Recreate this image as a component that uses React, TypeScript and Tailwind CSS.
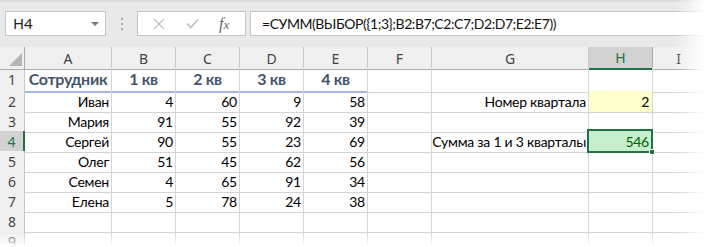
import React from 'react';

const cols = ['A', 'B', 'C', 'D', 'E', 'F', 'G', 'H', 'I'];

const data: (string | number)[][] = [
  ['Иван', 4, 60, 9, 58],
  ['Мария', 91, 55, 92, 39],
  ['Сергей', 90, 55, 23, 69],
  ['Олег', 51, 45, 62, 56],
  ['Семен', 4, 65, 91, 34],
  ['Елена', 5, 78, 24, 38],
];

const gridCols = 'grid grid-cols-[25px_87px_64px_64px_64px_64px_64px_157px_64px_1fr]';
const cell = 'border-r border-b border-[#d4d4d4] flex items-center overflow-visible whitespace-nowrap';
const rowHead = 'border-r border-b border-[#c8c8c8] bg-[#f0f0f0] flex items-center justify-center text-[14px] text-[#444]';

function RowHeader({ n, active }: { n: number; active?: boolean }) {
  return (
    <div
      className={
        active
          ? 'border-b border-[#c8c8c8] bg-[#d2d2d2] flex items-center justify-center text-[14px] text-[#217346] border-r-2 border-r-[#217346]'
          : rowHead
      }
      style={{ fontFamily: '"Noto Sans", "Open Sans", sans-serif' }}
    >
      {n}
    </div>
  );
}

export default function App() {
  return (
    <div
      className="relative w-[705px] h-[247px] overflow-hidden bg-white text-black"
      style={{ fontFamily: 'Lato, "Liberation Sans", sans-serif' }}
    >
      {/* formula bar */}
      <div className="h-[47px] bg-[#e9e9e9] border-t-2 border-[#dcdcdc] flex items-start pt-[9px]">
        <div className="ml-[5px] w-[101px] h-[25px] bg-white border border-[#c6c6c6] flex items-center justify-between pl-[7px] pr-[6px]">
          <span className="text-[15px] text-[#222]" style={{ fontFamily: '"Noto Sans", sans-serif' }}>H4</span>
          <span className="w-0 h-0 border-l-[4px] border-r-[4px] border-t-[4px] border-l-transparent border-r-transparent border-t-[#777]" />
        </div>
        <div className="w-[31px] h-[25px] flex flex-col items-center justify-center gap-[3px]">
          <span className="w-[2px] h-[2px] bg-[#a8a8a8]" />
          <span className="w-[2px] h-[2px] bg-[#a8a8a8]" />
          <span className="w-[2px] h-[2px] bg-[#a8a8a8]" />
        </div>
        <div className="w-[109px] h-[25px] bg-white border border-[#c6c6c6] flex items-center">
          <svg width="12" height="12" viewBox="0 0 12 12" className="ml-[15px]">
            <path d="M1 1 L11 11 M11 1 L1 11" stroke="#c2c2c2" strokeWidth="1.3" fill="none" />
          </svg>
          <svg width="13" height="11" viewBox="0 0 13 11" className="ml-[21px]">
            <path d="M1 5.5 L4.8 9.5 L12 1.5" stroke="#c2c2c2" strokeWidth="1.8" fill="none" />
          </svg>
          <span
            className="ml-[20px] text-[16px] italic text-[#666]"
            style={{ fontFamily: '"Liberation Serif", serif' }}
          >
            f<span className="text-[13px]">x</span>
          </span>
        </div>
        <div className="ml-[4px] flex-1 h-[25px] bg-white border border-[#c6c6c6] flex items-center pl-[11px]">
          <span className="text-[14px] tracking-[-0.45px] text-[#111]">=СУММ(ВЫБОР({'{'}1;3{'}'};B2:B7;C2:C7;D2:D7;E2:E7))</span>
        </div>
      </div>

      {/* column headers */}
      <div className={`${gridCols} h-[20px]`}>
        <div className="border-r border-b border-[#ababab] bg-[#f0f0f0] relative">
          <svg width="13" height="13" viewBox="0 0 13 13" className="absolute right-[2px] bottom-[3px]">
            <path d="M13 0 L13 13 L0 13 Z" fill="#b4b4b4" />
          </svg>
        </div>
        {cols.map((c) => (
          <div
            key={c}
            className={
              c === 'H'
                ? 'bg-[#d2d2d2] border-r border-[#ababab] border-b-2 border-b-[#217346] flex items-center justify-center text-[14px] text-[#217346]'
                : 'bg-[#f0f0f0] border-r border-[#c8c8c8] border-b border-b-[#ababab] flex items-center justify-center text-[14px] text-[#444]'
            }
            style={{ fontFamily: '"Noto Sans", "Open Sans", sans-serif' }}
          >
            {c}
          </div>
        ))}
      </div>

      {/* row 1 */}
      <div className={`${gridCols} h-[24px]`}>
        <RowHeader n={1} />
        {['Сотрудник', '1 кв', '2 кв', '3 кв', '4 кв'].map((t) => (
          <div
            key={t}
            className="border-r border-[#d4d4d4] border-b-2 border-b-[#a6b8e0] flex items-center justify-center text-[16px] tracking-[-0.3px] font-bold text-[#44546a] whitespace-nowrap"
          >
            {t}
          </div>
        ))}
        {[0, 1, 2, 3].map((i) => (
          <div key={i} className={cell} />
        ))}
        <div className="border-b border-[#d4d4d4]" />
      </div>

      {/* rows 2..9 */}
      {Array.from({ length: 8 }).map((_, i) => {
        const n = i + 2;
        const r = data[i];
        let g = '';
        let h: React.ReactNode = null;
        let hClass = cell;
        if (n === 2) {
          g = 'Номер квартала';
          h = 2;
          hClass = `${cell} bg-[#ffffcc] justify-end pr-[3px]`;
        }
        if (n === 4) {
          g = 'Сумма за 1 и 3 кварталы';
          h = 546;
          hClass = `${cell} bg-[#c6efce] text-[#006100] justify-end pr-[3px] relative`;
        }
        return (
          <div key={n} className={`${gridCols} h-[20px] text-[14px] tracking-[-0.25px]`}>
            <RowHeader n={n} active={n === 4} />
            {[0, 1, 2, 3, 4].map((j) => (
              <div key={j} className={`${cell} justify-end pr-[2px]`}>
                {r ? r[j] : ''}
              </div>
            ))}
            <div className={cell} />
            <div className={`${cell} justify-end pr-[2px]`}>{g}</div>
            <div className={hClass}>
              {h}
              {n === 4 && (
                <>
                  <span className="absolute -left-[2px] -top-[2px] -right-px -bottom-px border-2 border-[#217346]" />
                  <span className="absolute -right-[3px] -bottom-[3px] w-[6px] h-[6px] bg-[#217346] border border-white" />
                </>
              )}
            </div>
            <div className="border-b border-[#d4d4d4]" />
          </div>
        );
      })}

      {/* torn-off fade */}
      <div className="pointer-events-none absolute top-0 right-0 h-full w-[30px] bg-gradient-to-r from-transparent to-white" />
      <div className="pointer-events-none absolute left-0 bottom-0 w-full h-[14px] bg-gradient-to-b from-transparent to-white" />
    </div>
  );
}
